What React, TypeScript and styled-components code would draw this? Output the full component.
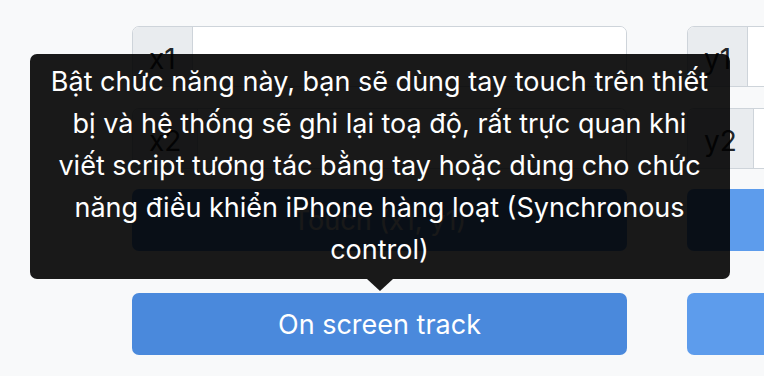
import styled, { createGlobalStyle } from "styled-components";

const GlobalStyle = createGlobalStyle`
  html, body {
    margin: 0;
    padding: 0;
    background: #f8f9fa;
  }
  body {
    font-family: Inter, "Noto Sans", "Liberation Sans", sans-serif;
    color: #212529;
  }
`;

const Page = styled.div`
  width: 764px;
  height: 376px;
  overflow: hidden;
  background: #f8f9fa;
`;

const Columns = styled.div`
  display: grid;
  grid-template-columns: 495px 495px;
  column-gap: 60px;
  padding: 26px 0 0 132px;
  width: max-content;
`;

const Column = styled.div`
  display: flex;
  flex-direction: column;
`;

const InputGroup = styled.div<{ $gap?: number }>`
  display: flex;
  height: 61px;
  margin-bottom: ${(p) => p.$gap ?? 0}px;
  border: 1px solid #ced4da;
  border-radius: 7px;
  overflow: hidden;
  box-sizing: border-box;
  background: #fff;
`;

const Addon = styled.span`
  display: flex;
  align-items: center;
  padding: 4px 16px 0;
  background: #e9ecef;
  border-right: 1px solid #ced4da;
  font-size: 28px;
  color: #212529;
`;

const Field = styled.input`
  flex: 1;
  border: 0;
  outline: none;
  background: #fff;
  font: inherit;
  font-size: 28px;
  padding: 0 16px;
  min-width: 0;
`;

const Button = styled.button<{ $active?: boolean; $gap?: number }>`
  height: 62px;
  margin-bottom: ${(p) => p.$gap ?? 0}px;
  border: 0;
  border-radius: 7px;
  background: ${(p) => (p.$active ? "#4a89dc" : "#5d9cec")};
  color: #fff;
  font-family: inherit;
  font-size: 27px;
  cursor: pointer;
  width: 100%;
`;

const Anchor = styled.div`
  position: relative;
`;

const Tooltip = styled.div`
  position: absolute;
  bottom: calc(100% + 14px);
  left: 50%;
  transform: translateX(-50%);
  width: 700px;
  box-sizing: border-box;
  padding: 7px 12px 8px;
  background: rgba(0, 0, 0, 0.9);
  color: #fff;
  border-radius: 7px;
  font-size: 27px;
  line-height: 42px;
  text-align: center;
  z-index: 10;

  &::after {
    content: "";
    position: absolute;
    top: 100%;
    left: 50%;
    margin-left: -13px;
    border-style: solid;
    border-width: 12px 13px 0 13px;
    border-color: rgba(0, 0, 0, 0.9) transparent transparent transparent;
  }
`;

const TipLine = styled.span`
  display: block;
  white-space: nowrap;
`;

// line breaks as the tooltip wraps them in the original
const tipLines = [
  "Bật chức năng này, bạn sẽ dùng tay touch trên thiết",
  "bị và hệ thống sẽ ghi lại toạ độ, rất trực quan khi",
  "viết script tương tác bằng tay hoặc dùng cho chức",
  "năng điều khiển iPhone hàng loạt (Synchronous",
  "control)",
];

const Coords = ({ a, b, showTip }: { a: string; b: string; showTip?: boolean }) => (
  <Column>
    <InputGroup $gap={21}>
      <Addon>{a}1</Addon>
      <Field />
    </InputGroup>
    <InputGroup $gap={20}>
      <Addon>{a}2</Addon>
      <Field />
    </InputGroup>
    <Button $gap={42}>Touch ({a}1, {b}1)</Button>
    <Anchor>
      {showTip && (
        <Tooltip>
          {tipLines.map((l) => (
            <TipLine key={l}>{l}</TipLine>
          ))}
        </Tooltip>
      )}
      <Button $active={showTip}>On screen track</Button>
    </Anchor>
  </Column>
);

export default function App() {
  return (
    <Page>
      <GlobalStyle />
      <Columns>
        <Coords a="x" b="y" showTip />
        <Coords a="y" b="x" />
      </Columns>
    </Page>
  );
}
